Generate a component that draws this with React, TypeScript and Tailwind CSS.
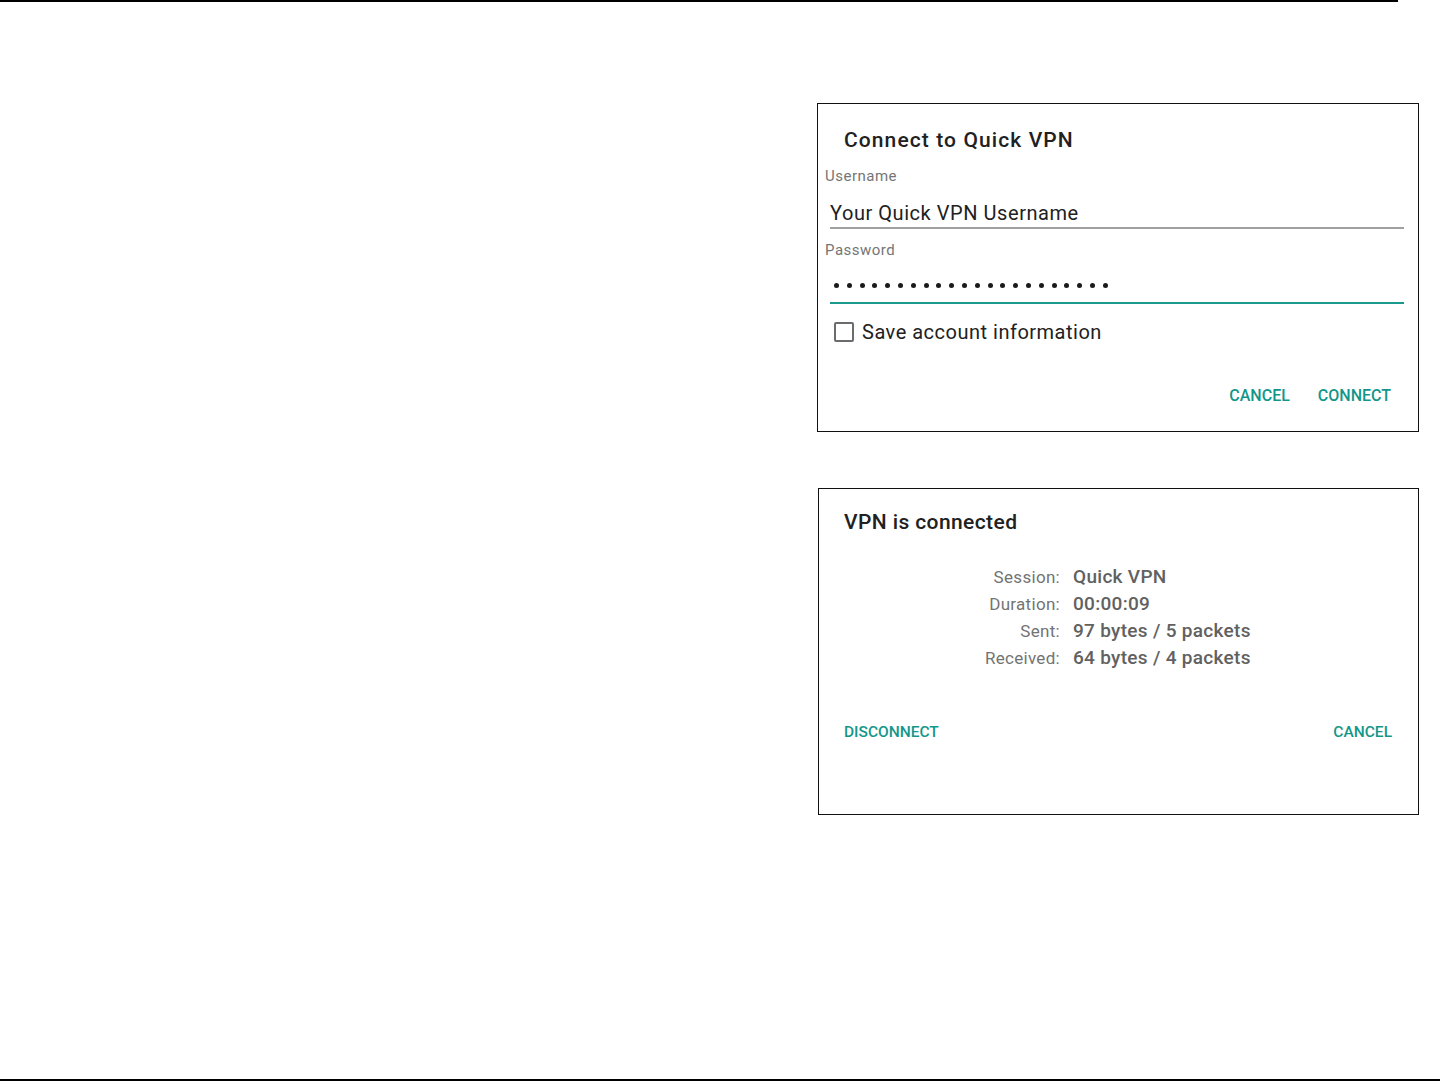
import React from "react";

const teal = "text-[#13968a]";

function Dots() {
  const dots = Array.from({ length: 22 });
  return (
    <div className="ml-[16px] mt-[21px] flex h-[10px] items-center gap-[7.8px]">
      {dots.map((_, i) => (
        <span key={i} className="block h-[5px] w-[5px] rounded-full bg-[#1a1a1a]" />
      ))}
    </div>
  );
}

function ConnectDialog() {
  return (
    <div className="h-[329px] w-[602px] border border-[#111] bg-white">
      <div className="pl-[26px] pt-[21.6px] text-[21px] font-medium leading-[28px] tracking-[1.1px] text-[#212121]">
        Connect to Quick VPN
      </div>
      <div className="mt-[12.5px] pl-[7px] text-[15px] leading-[20px] tracking-[0.5px] text-[#757575]">Username</div>
      <div className="mt-[14px] pl-[12px] text-[20px] leading-[26px] tracking-[0.55px] text-[#212121]">Your Quick VPN Username</div>
      <div className="ml-[12px] mt-[1.2px] h-[1.5px] w-[574px] bg-[#a0a0a0]" />
      <div className="mt-[11px] pl-[7px] text-[15px] leading-[20px] tracking-[0.5px] text-[#757575]">Password</div>
      <Dots />
      <div className="ml-[12px] mt-[11.5px] h-[2px] w-[574px] bg-[#1a9a8c]" />
      <div className="ml-[16px] mt-[15.2px] flex h-[26px] items-center gap-[8px]">
        <span className="block h-[20px] w-[20px] rounded-[2px] border-2 border-[#6b6b6b]" />
        <span className="text-[20px] leading-[26px] tracking-[0.5px] text-[#212121]">Save account information</span>
      </div>
      <div className={`mt-[40.8px] flex justify-end gap-[28px] pr-[27px] text-[16px] font-medium leading-[20px] ${teal}`}>
        <span>CANCEL</span>
        <span>CONNECT</span>
      </div>
    </div>
  );
}

function Row({ label, value }: { label: string; value: string }) {
  return (
    <div className="flex h-[27px] items-baseline">
      <span className="w-[241px] text-right text-[17px] leading-[27px] tracking-[0.3px] text-[#737373]">{label}</span>
      <span className="ml-[13px] text-[19px] font-medium leading-[27px] tracking-[0.3px] text-[#616161]">{value}</span>
    </div>
  );
}

function ConnectedDialog() {
  return (
    <div className="ml-[1px] mt-[56px] h-[327px] w-[601px] border border-[#111] bg-white">
      <div className="pl-[25px] pt-[18.6px] text-[21px] font-medium leading-[28px] tracking-[0.4px] text-[#212121]">
        VPN is connected
      </div>
      <div className="mt-[27px]">
        <Row label="Session:" value="Quick VPN" />
        <Row label="Duration:" value="00:00:09" />
        <Row label="Sent:" value="97 bytes / 5 packets" />
        <Row label="Received:" value="64 bytes / 4 packets" />
      </div>
      <div className={`mt-[51px] flex justify-between pl-[25px] pr-[26px] text-[15.5px] font-medium leading-[20px] ${teal}`}>
        <span>DISCONNECT</span>
        <span>CANCEL</span>
      </div>
    </div>
  );
}

export default function App() {
  return (
    <div className="flex h-[1081px] w-[1440px] flex-col bg-white font-['Roboto',sans-serif]">
      <div className="h-[2px] w-[1398px] bg-black" />
      <div className="flex-1 pl-[817px] pt-[101px]">
        <ConnectDialog />
        <ConnectedDialog />
      </div>
      <div className="h-[2px] w-full bg-black" />
    </div>
  );
}
